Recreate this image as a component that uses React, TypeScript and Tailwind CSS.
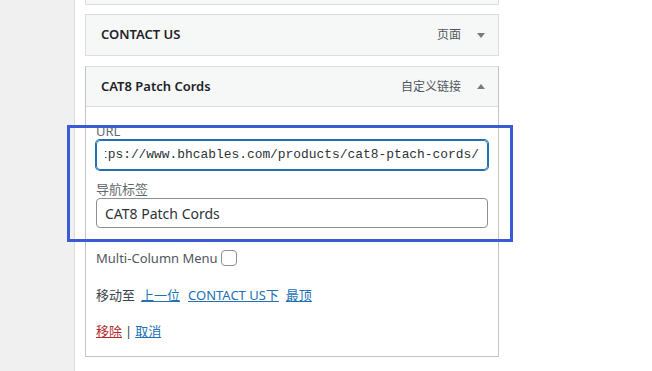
import React from 'react';

const font = '"Noto Sans", "Noto Sans CJK SC", sans-serif';

// Collapsed menu item header
const ItemHeader: React.FC<{ title: string; type: string; open?: boolean }> = ({ title, type, open }) => (
    <div className="flex items-center h-full pl-[15px] pr-[13px]">
        <span className="text-[13px] font-semibold text-[#1d2327]">{title}</span>
        <span className="ml-auto text-[12px] text-[#50575e]">{type}</span>
        <span className="ml-[16px] w-[8px] flex justify-center">
            {open ? (
                <span className="w-0 h-0 border-l-[4px] border-r-[4px] border-b-[5px] border-l-transparent border-r-transparent border-b-[#787c82]" />
            ) : (
                <span className="w-0 h-0 border-l-[4px] border-r-[4px] border-t-[5px] border-l-transparent border-r-transparent border-t-[#787c82]" />
            )}
        </span>
    </div>
);

export default function App() {
    return (
        <div className="relative w-[652px] h-[371px] overflow-hidden bg-white flex" style={{ fontFamily: font }}>
            {/* Left sidebar strip */}
            <div className="w-[75px] h-full bg-[#f0f0f1] border-r border-[#dcdcde]" />

            <div className="ml-[10px] w-[414px] flex flex-col">
                {/* Item above, mostly scrolled out */}
                <div className="h-[5px] bg-[#f6f7f7] border-x border-b border-[#dcdcde]" />

                {/* CONTACT US */}
                <div className="mt-[9px] h-[42px] bg-[#f6f7f7] border border-[#dcdcde]">
                    <ItemHeader title="CONTACT US" type="页面" />
                </div>

                {/* CAT8 Patch Cords (expanded) */}
                <div className="mt-[10px] border border-[#c3c4c7] border-t-[#dcdcde]">
                    <div className="h-[40px] bg-[#f6f7f7] border-b border-[#dcdcde]">
                        <ItemHeader title="CAT8 Patch Cords" type="自定义链接" open />
                    </div>

                    <div className="px-[10px] pt-[15px] pb-[16px] text-[13px] text-[#3c434a]">
                        <div className="leading-[18px] text-[#646970]">URL</div>
                        <div className="h-[30px] rounded-[4px] border border-[#2271b1] ring-1 ring-[#2271b1] px-[8px] flex items-center">
                            <div className="flex-1 flex justify-end overflow-hidden">
                                <span
                                    className="whitespace-nowrap text-[12.9px] text-[#2c3338]"
                                    style={{ fontFamily: '"Liberation Mono", "DejaVu Sans Mono", monospace' }}
                                >
                                    https://www.bhcables.com/products/cat8-ptach-cords/
                                </span>
                            </div>
                        </div>

                        <div className="mt-[10px] leading-[18px] text-[#646970]">导航标签</div>
                        <div className="h-[30px] rounded-[4px] border border-[#8c8f94] px-[8px] flex items-center text-[14px] text-[#2c3338]">
                            CAT8 Patch Cords
                        </div>

                        <div className="mt-[20px] h-[20px] flex items-center">
                            <span className="text-[#50575e] pt-[2px]">Multi-Column Menu</span>
                            <span className="ml-[3px] w-[16px] h-[16px] rounded-[4px] border border-[#8c8f94] bg-white" />
                        </div>

                        <div className="mt-[18px] leading-[18px] flex text-[#3c434a]">
                            <span>移动至</span>
                            <a className="ml-[6px] text-[#2271b1] underline">上一位</a>
                            <a className="ml-[8px] text-[#2271b1] underline">CONTACT US下</a>
                            <a className="ml-[7px] text-[#2271b1] underline">最顶</a>
                        </div>

                        <div className="mt-[18px] leading-[18px] flex text-[#3c434a]">
                            <a className="text-[#b32d2e] underline">移除</a>
                            <span className="mx-[3px]">|</span>
                            <a className="text-[#2271b1] underline">取消</a>
                        </div>
                    </div>
                </div>
            </div>

            {/* Annotation highlight */}
            <div className="absolute left-[67px] top-[125px] w-[446px] h-[117px] border-[3px] border-[#3b5bd6]" />
        </div>
    );
}
